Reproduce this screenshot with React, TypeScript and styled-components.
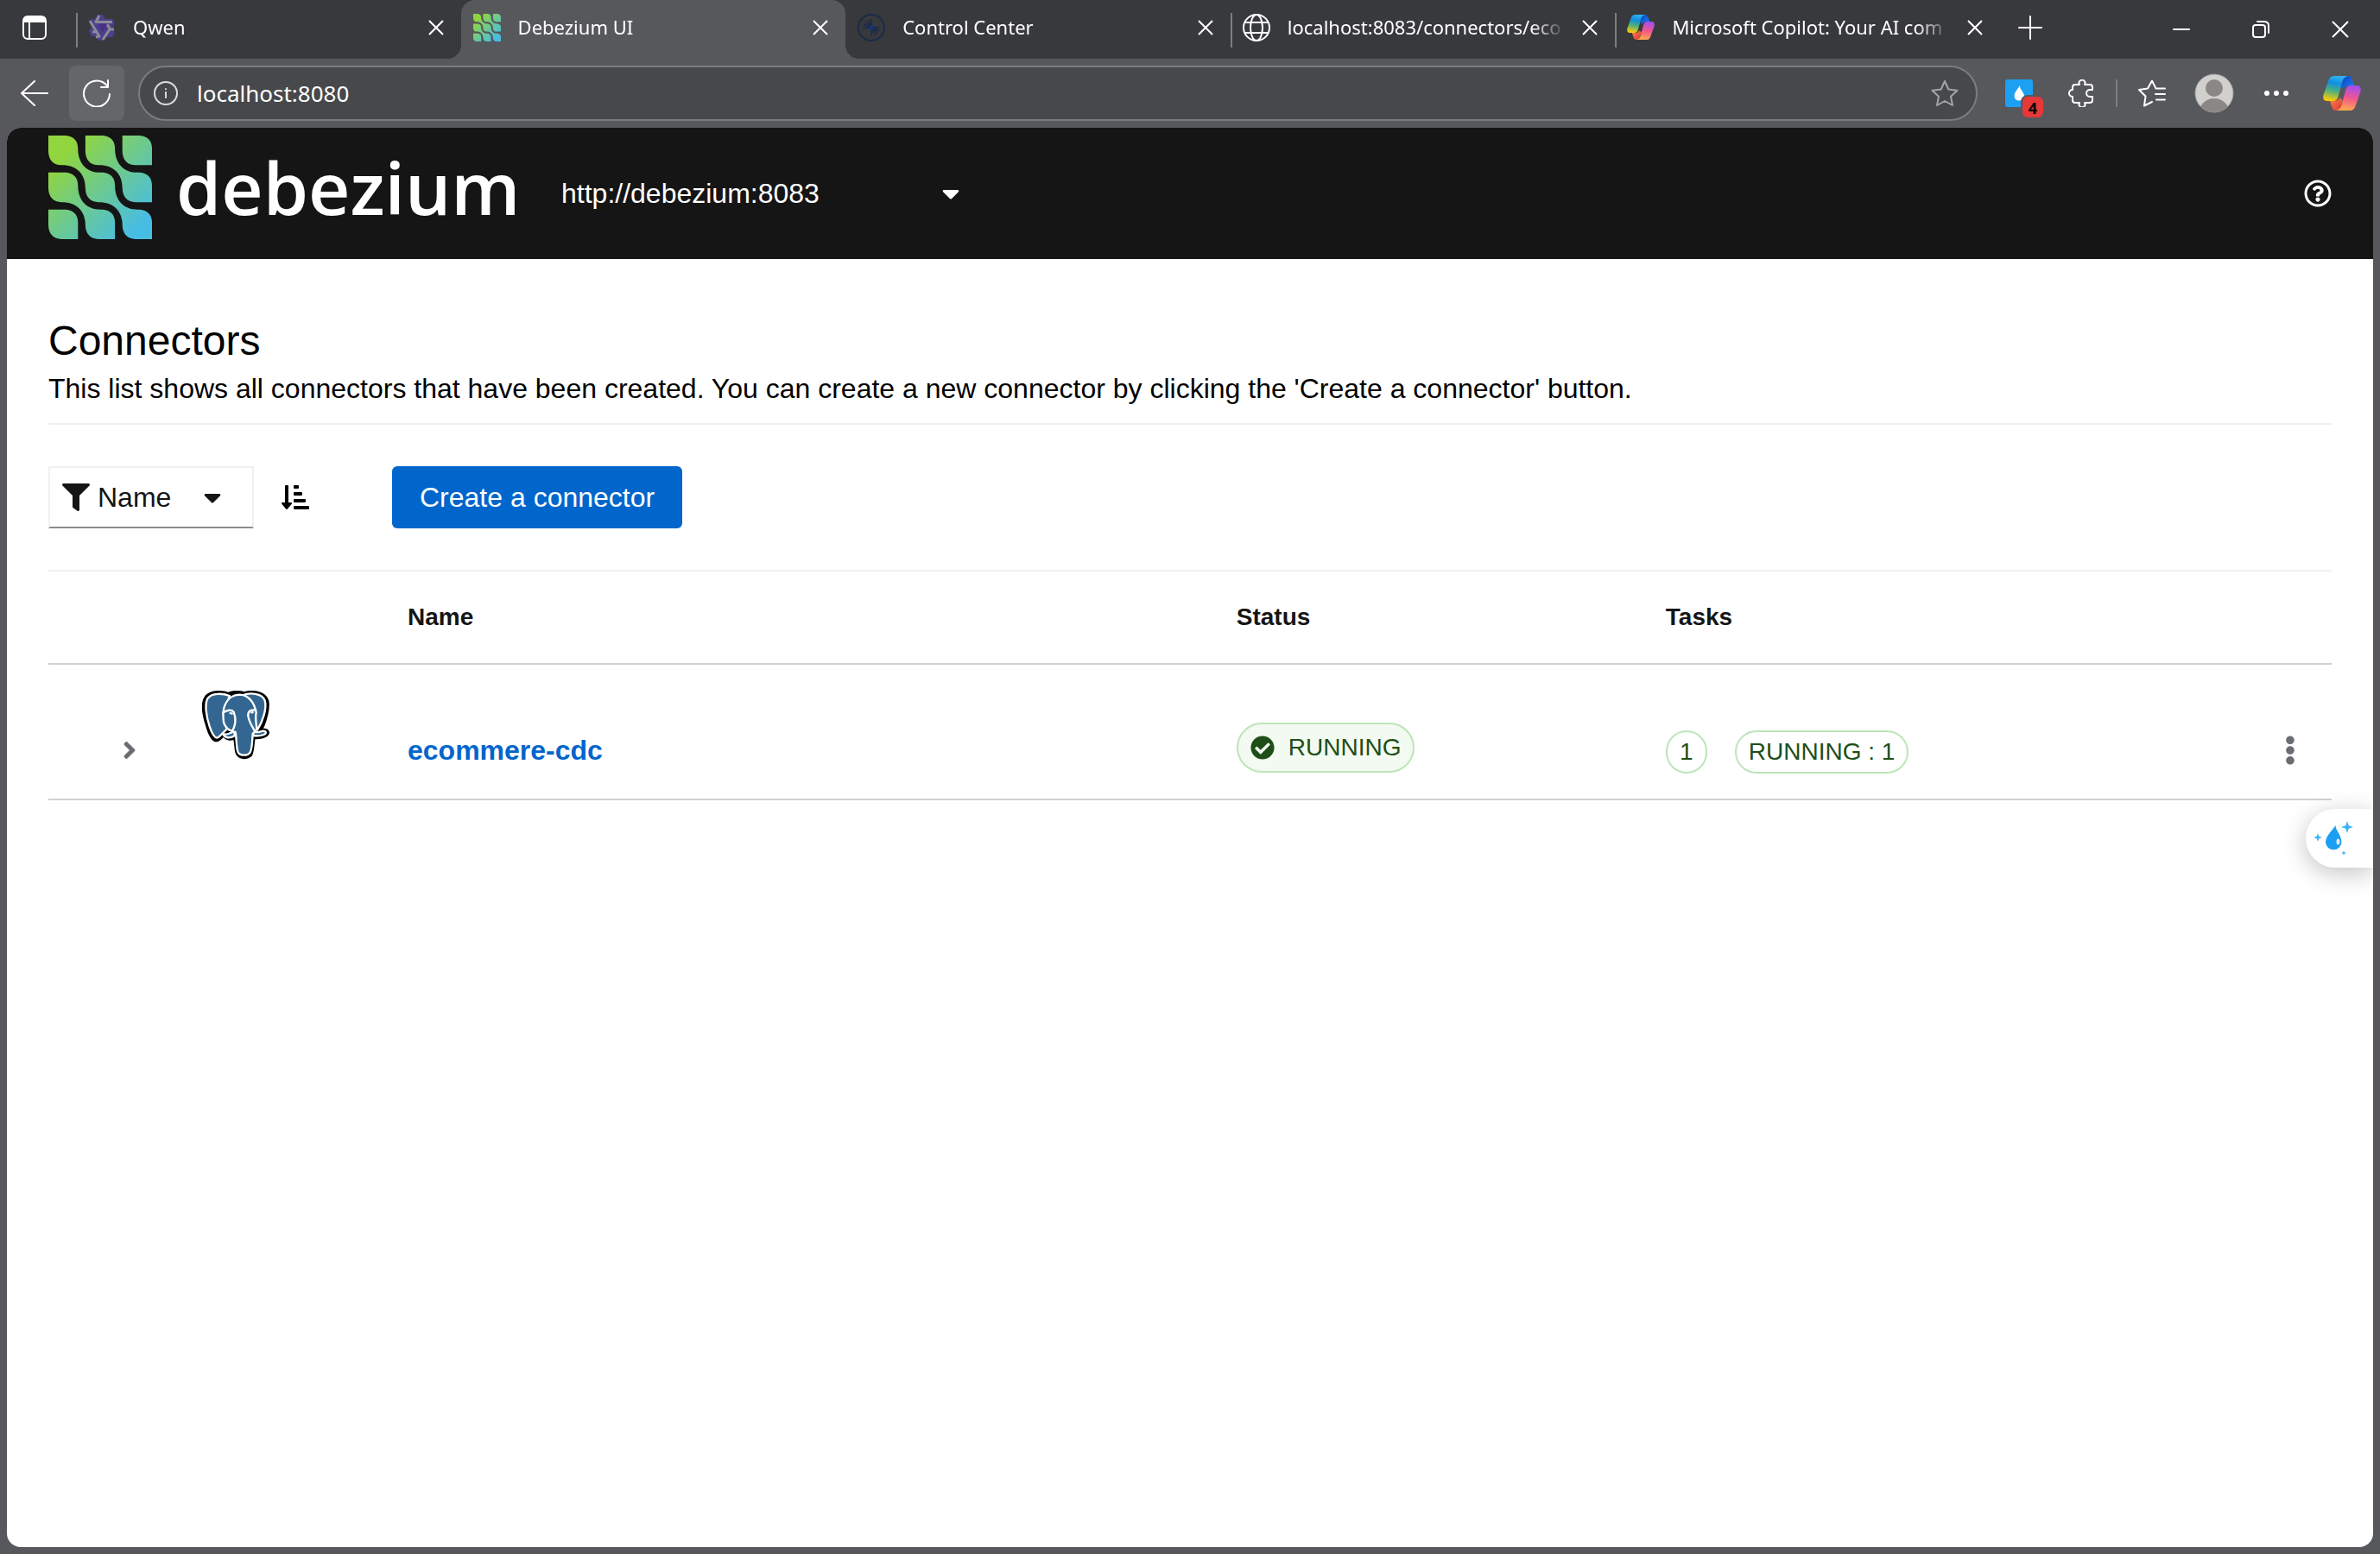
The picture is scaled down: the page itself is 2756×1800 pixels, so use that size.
import React, { useId } from "react";
import styled, { createGlobalStyle, css } from "styled-components";
import {
  FaAngleRight,
  FaCaretDown,
  FaCheckCircle,
  FaEllipsisV,
  FaFilter,
  FaRegQuestionCircle,
  FaSortAmountDownAlt,
} from "react-icons/fa";

const color = {
  strip: "#38393c",
  chrome: "#57585c",
  field: "#47484b",
  fieldBorder: "#7b7c7f",
  header: "#151515",
  text: "#151515",
  muted: "#6a6e73",
  primary: "#0066cc",
  lineSoft: "#f0f0f0",
  line: "#d2d2d2",
  green: "#1e4f18",
  greenLine: "#bde5b8",
  greenFill: "#f3faf2",
};

const browserFont = `"Noto Sans", "Open Sans", sans-serif`;
const pageFont = `"Liberation Sans", Arial, sans-serif`;

const GlobalStyle = createGlobalStyle`
  *, *::before, *::after { box-sizing: border-box; }
  body { margin: 0; background: ${color.chrome}; }
  button, input, select { font: inherit; color: inherit; margin: 0; }
  svg { display: block; flex: none; }
`;

/* ---------- Browser frame ---------- */

const Browser = styled.div`
  display: flex;
  flex-direction: column;
  min-height: 100vh;
  background: ${color.chrome};
  color: #fff;
  font-family: ${browserFont};
`;

const TabStrip = styled.div`
  display: flex;
  height: 68px;
  background: ${color.strip};
`;

const PlainButton = styled.button`
  display: flex;
  align-items: center;
  justify-content: center;
  padding: 0;
  border: 0;
  background: none;
  cursor: pointer;
`;

const StripButton = styled(PlainButton)<{ $width: number }>`
  flex: none;
  width: ${(p) => p.$width}px;
  height: 64px;
`;

const Tabs = styled.div`
  display: flex;
  flex: 0 1 2228px;
  min-width: 0;
  margin-left: 8px;
`;

const Tab = styled.div<{ $active?: boolean; $divided?: boolean }>`
  position: relative;
  display: flex;
  flex: 1 1 0;
  align-items: center;
  min-width: 0;
  padding: 0 9px 4px 14px;

  ${(p) =>
    p.$divided &&
    css`
      &::before {
        content: "";
        position: absolute;
        left: 0;
        top: 15px;
        width: 2px;
        height: 40px;
        background: #7d7e80;
      }
    `}

  ${(p) =>
    p.$active &&
    css`
      background: ${color.chrome};
      border-radius: 16px 16px 0 0;

      &::before,
      &::after {
        content: "";
        position: absolute;
        bottom: 0;
        width: 16px;
        height: 16px;
      }
      &::before {
        left: -16px;
        background: radial-gradient(circle at 0 0, transparent 16px, ${color.chrome} 16px);
      }
      &::after {
        right: -16px;
        background: radial-gradient(circle at 100% 0, transparent 16px, ${color.chrome} 16px);
      }
    `}
`;

const TabTitle = styled.span`
  flex: 1;
  min-width: 0;
  margin: 0 8px 0 20px;
  padding-bottom: 2px;
  overflow: hidden;
  white-space: nowrap;
  font-size: 22px;
  line-height: 32px;
  mask-image: linear-gradient(to right, #000 calc(100% - 40px), transparent);
`;

const TabClose = styled(PlainButton)`
  flex: none;
  width: 40px;
  height: 40px;
`;

const WindowButtons = styled.div`
  display: flex;
  margin-left: auto;
`;

const WindowButton = styled(PlainButton)`
  width: 92px;
  height: 68px;
`;

const AddressRow = styled.div`
  display: flex;
  align-items: center;
  height: 80px;
  padding: 0 4px 0 8px;
`;

const NavButton = styled(PlainButton)<{ $filled?: boolean }>`
  width: 64px;
  height: 64px;
  margin-right: ${(p) => (p.$filled ? 16 : 8)}px;
  border-radius: 8px;
  background: ${(p) => (p.$filled ? "#65666a" : "none")};
`;

const AddressBar = styled.div`
  display: flex;
  flex: 1;
  align-items: center;
  height: 64px;
  margin-right: 12px;
  padding: 0 20px 0 16px;
  border: 2px solid ${color.fieldBorder};
  border-radius: 32px;
  background: ${color.field};
`;

const AddressInput = styled.input`
  flex: 1;
  min-width: 0;
  padding: 0;
  margin: 0 22px;
  border: 0;
  outline: 0;
  background: none;
  font-size: 26px;
  line-height: 40px;
`;

const ToolButton = styled(PlainButton)<{ $wide?: boolean }>`
  position: relative;
  width: ${(p) => (p.$wide ? 80 : 72)}px;
  height: 64px;
`;

const ToolDivider = styled.span`
  width: 2px;
  height: 32px;
  margin: 0 4px;
  background: ${color.fieldBorder};
`;

const ExtensionBadge = styled.span`
  position: absolute;
  left: 38px;
  top: 34px;
  width: 28px;
  height: 28px;
  border: 2px solid ${color.chrome};
  border-radius: 8px;
  background: #e53838;
  color: #000;
  font-size: 18px;
  font-weight: 700;
  line-height: 26px;
  text-align: center;
`;

/* ---------- Debezium page ---------- */

const Page = styled.div`
  position: relative;
  flex: 1;
  margin: 0 8px 8px;
  overflow: hidden;
  border-radius: 16px;
  background: #fff;
  color: ${color.text};
  font-family: ${pageFont};
  font-size: 32px;
  line-height: 48px;
`;

const Masthead = styled.header`
  display: flex;
  align-items: center;
  height: 152px;
  padding: 0 48px;
  background: ${color.header};
  color: #fff;
`;

const Brand = styled.a`
  display: flex;
  align-items: center;
  gap: 28px;
  width: 594px;
  padding-bottom: 14px;
  color: #fff;
  text-decoration: none;
`;

const Wordmark = styled.span`
  font-family: "Open Sans", "Noto Sans", sans-serif;
  font-size: 84px;
  font-weight: 600;
  line-height: 112px;
`;

const SelectBox = styled.label`
  position: relative;
  display: flex;
  align-items: center;
`;

const Select = styled.select`
  appearance: none;
  width: 100%;
  padding: 0;
  border: 0;
  outline: 0;
  background: none;
  line-height: 48px;

  option {
    color: ${color.text};
  }
`;

const SelectCaret = styled(FaCaretDown)`
  position: absolute;
  right: 30px;
  pointer-events: none;
`;

const ClusterSelect = styled(SelectBox)`
  width: 497px;
`;

const HelpButton = styled(PlainButton)`
  margin-left: auto;
`;

const Main = styled.main`
  padding: 64px 48px 0;
`;

const Intro = styled.section`
  padding-bottom: 16px;
  border-bottom: 2px solid ${color.lineSoft};
  color: #000;
`;

const Title = styled.h1`
  margin: 0;
  font-size: 48px;
  font-weight: 400;
  line-height: 62px;
`;

const Lead = styled.p`
  margin: 0;
`;

const Toolbar = styled.div`
  display: flex;
  align-items: center;
  padding: 48px 0;
  border-bottom: 2px solid ${color.lineSoft};
`;

const FilterSelect = styled(SelectBox)`
  gap: 9px;
  width: 238px;
  height: 72px;
  padding-left: 14px;
  border: 2px solid ${color.lineSoft};
  border-bottom-color: #8a8d90;
`;

const SortButton = styled(PlainButton)`
  width: 96px;
  height: 72px;
  margin-right: 64px;
  color: #000;
`;

const CreateButton = styled.button`
  height: 72px;
  padding: 0 32px;
  border: 0;
  border-radius: 6px;
  background: ${color.primary};
  color: #fff;
  cursor: pointer;
`;

const Table = styled.table`
  width: 100%;
  table-layout: fixed;
  border-collapse: separate;
  border-spacing: 0;
`;

const Column = styled.col<{ $width?: string }>`
  width: ${(p) => p.$width ?? "auto"};
`;

const HeadRow = styled.tr`
  height: 108px;
`;

const HeadCell = styled.th`
  padding: 0;
  border-bottom: 2px solid ${color.line};
  font-size: 28px;
  line-height: 42px;
  text-align: left;
`;

const BodyRow = styled.tr`
  height: 157px;
`;

const Cell = styled.td<{ $top?: number }>`
  padding: ${(p) => p.$top ?? 75}px 0 16px;
  border-bottom: 2px solid ${color.line};
  vertical-align: top;
`;

const ToggleButton = styled(PlainButton)`
  width: 32px;
  height: 48px;
  margin-left: 78px;
  color: ${color.muted};
`;

const KebabButton = styled(PlainButton)`
  width: 32px;
  height: 48px;
  margin: 0 32px 0 auto;
  color: ${color.muted};
`;

const ConnectorLogo = styled.div`
  padding-left: 38px;
`;

const ConnectorLink = styled.a`
  color: ${color.primary};
  font-weight: 700;
  text-decoration: none;
`;

const StatusLabel = styled.span`
  display: inline-flex;
  align-items: center;
  gap: 16px;
  height: 58px;
  padding: 0 14px;
  border: 2px solid ${color.greenLine};
  border-radius: 30px;
  background: ${color.greenFill};
  color: ${color.green};
  font-size: 28px;
  line-height: 42px;
  vertical-align: top;
`;

const TaskBadges = styled.div`
  display: flex;
  gap: 32px;
`;

const TaskBadge = styled.span`
  min-width: 48px;
  height: 50px;
  padding: 0 14px;
  border: 2px solid ${color.greenLine};
  border-radius: 25px;
  color: ${color.green};
  font-size: 28px;
  line-height: 46px;
  text-align: center;
`;

const Assistant = styled.button`
  position: absolute;
  right: 0;
  top: 789px;
  display: flex;
  align-items: center;
  width: 78px;
  height: 68px;
  padding: 0 0 0 8px;
  border: 0;
  border-radius: 34px 0 0 34px;
  background: #fff;
  box-shadow: 0 6px 28px rgba(0, 0, 0, 0.24);
  cursor: pointer;
`;

/* ---------- Drawings ---------- */

const PITCH = 42.5;

/** One diagonal chain of linked tiles in the Debezium mark. */
function chain(ox: number, oy: number, count: number) {
  let d = `M${ox} ${oy}`;
  for (let i = 0; i < count; i++) {
    const x = ox + i * PITCH;
    const y = oy + i * PITCH;
    d += `H${x + 20}C${x + 29} ${y + 1} ${x + 34} ${y + 6} ${x + 34} ${y + 15}`;
    d +=
      i < count - 1
        ? `C${x + 34} ${y + 32} ${x + 44} ${y + 42.5} ${x + 60} ${y + 42.5}`
        : `V${y + 34}`;
  }
  for (let i = count - 1; i >= 0; i--) {
    const x = ox + i * PITCH;
    const y = oy + i * PITCH;
    d += `H${x + 15}C${x + 6} ${y + 34} ${x} ${y + 28} ${x} ${y + 17.5}`;
    if (i > 0) d += `C${x} ${y + 1.5} ${x - 10.5} ${y - 8.5} ${x - 26.5} ${y - 8.5}`;
  }
  return d + "Z";
}

function DebeziumMark({ size }: { size: number }) {
  const id = useId();
  return (
    <svg width={size} height={size} viewBox="0 0 119 119" aria-hidden="true">
      <defs>
        <linearGradient id={id} gradientUnits="userSpaceOnUse" x1="20" y1="20" x2="104" y2="104">
          <stop offset="0" stopColor="#91d53f" />
          <stop offset="0.5" stopColor="#6bc992" />
          <stop offset="1" stopColor="#48bde3" />
        </linearGradient>
      </defs>
      <g fill={`url(#${id})`}>
        <path d={chain(0, 0, 3)} />
        <path d={chain(PITCH, 0, 2)} />
        <path d={chain(0, PITCH, 2)} />
        <path d={chain(PITCH * 2, 0, 1)} />
        <path d={chain(0, PITCH * 2, 1)} />
      </g>
    </svg>
  );
}

function CopilotMark({ size }: { size: number }) {
  const id = useId();
  const ribbon =
    "M6.5 5Q8 0 13 0H29Q24 1 22.5 6L17.5 24.5Q16 29 12 29H5.500Q-1 29 .5 22Z";
  const fold = "M29 0Q32.500 0 33.500 3.500L36 11H31Q26 11 24.500 15L21 12L23 5Q24.500 0 29 0Z";
  return (
    <svg width={size} height={(size * 40) / 44} viewBox="0 0 44 40" aria-hidden="true">
      <defs>
        <linearGradient id={`${id}a`} x1="0.6" y1="0" x2="0.4" y2="1">
          <stop offset="0" stopColor="#31b4f2" />
          <stop offset="0.3" stopColor="#0f8fe2" />
          <stop offset="0.62" stopColor="#4fb07a" />
          <stop offset="1" stopColor="#ffcb05" />
        </linearGradient>
        <linearGradient id={`${id}b`} x1="0" y1="0" x2="1" y2="1">
          <stop offset="0" stopColor="#0b3fc4" />
          <stop offset="1" stopColor="#1b86ee" />
        </linearGradient>
        <linearGradient id={`${id}c`} x1="0.4" y1="1" x2="0.6" y2="0">
          <stop offset="0" stopColor="#a34df0" />
          <stop offset="0.5" stopColor="#f2578c" />
          <stop offset="1" stopColor="#ffad4d" />
        </linearGradient>
        <linearGradient id={`${id}d`} x1="0" y1="0" x2="1" y2="1">
          <stop offset="0" stopColor="#d9303c" />
          <stop offset="1" stopColor="#ff8a3d" />
        </linearGradient>
      </defs>
      <path d={fold} fill={`url(#${id}b)`} />
      <path d={fold} fill={`url(#${id}d)`} transform="rotate(180 22 20)" />
      <path d={ribbon} fill={`url(#${id}a)`} />
      <path d={ribbon} fill={`url(#${id}c)`} transform="rotate(180 22 20)" />
    </svg>
  );
}

function QwenMark() {
  return (
    <svg width="32" height="32" viewBox="0 0 32 32" aria-hidden="true">
      <path
        d="M11 1H17L20 6H28L31 11L28 16L31 22L28 27H22L17 31H12L9 26H4L1 20L4 15L1 9L4 6H8Z"
        fill="#4b3f8c"
      />
      <g fill="none" stroke="#8b8b94" strokeWidth="3" strokeLinejoin="round">
        <path d="M13 2L9 9.500H28" />
        <path d="M3 8L14 26L10 27" transform="translate(-1 0)" />
        <path d="M30 18H25L17 30M25 17L22 12" />
        <path d="M5 21H11" />
      </g>
      <path d="M12 12H22L16.500 22Z" fill="#4a2f86" />
    </svg>
  );
}

function ControlCenterMark() {
  const rays = [
    [16, 6, 16, 16],
    [6, 16, 16, 16],
    [16, 16, 16, 26],
    [16, 16, 26, 16],
    [9, 9, 16, 16],
    [16, 16, 23, 23],
    [12, 7, 16, 16],
    [7, 12, 16, 16],
    [16, 16, 20, 25],
    [16, 16, 25, 20],
  ];
  return (
    <svg width="32" height="32" viewBox="0 0 32 32" fill="none" stroke="#1a2a49" strokeWidth="2" aria-hidden="true">
      <circle cx="16" cy="16" r="15" />
      {rays.map(([x1, y1, x2, y2]) => (
        <line key={`${x1}-${y1}-${x2}-${y2}`} x1={x1} y1={y1} x2={x2} y2={y2} strokeWidth="1.5" />
      ))}
      <circle cx="16" cy="16" r="3" fill="#14356f" stroke="none" />
    </svg>
  );
}

function GlobeMark() {
  return (
    <svg width="32" height="32" viewBox="0 0 32 32" fill="none" stroke="#fff" strokeWidth="2" aria-hidden="true">
      <circle cx="16" cy="16" r="15" />
      <ellipse cx="16" cy="16" rx="7" ry="15" />
      <path d="M2 10H30M2 22H30" />
    </svg>
  );
}

function Cross({ size, stroke = 2 }: { size: number; stroke?: number }) {
  return (
    <svg width={size} height={size} viewBox={`0 0 ${size} ${size}`} stroke="#fff" strokeWidth={stroke} aria-hidden="true">
      <path d={`M1 1L${size - 1} ${size - 1}M${size - 1} 1L1 ${size - 1}`} />
    </svg>
  );
}

function Drawing({
  width = 32,
  height = 32,
  stroke = "#fff",
  children,
}: {
  width?: number;
  height?: number;
  stroke?: string;
  children: React.ReactNode;
}) {
  return (
    <svg
      width={width}
      height={height}
      viewBox={`0 0 ${width} ${height}`}
      fill="none"
      stroke={stroke}
      strokeWidth="2"
      strokeLinecap="round"
      strokeLinejoin="round"
      aria-hidden="true"
    >
      {children}
    </svg>
  );
}

function PostgresElephant() {
  return (
    <svg width="80" height="80" viewBox="0 0 240 240" role="img" aria-label="PostgreSQL">
      <g strokeLinejoin="round" strokeLinecap="round">
        <g stroke="#000" strokeWidth="20" fill="#000">
          <path d="M92 16C70 8 34 6 18 24C4 42 10 84 22 120C30 148 42 168 50 168C60 166 74 148 84 138L118 160L124 210C128 228 150 232 164 222C172 214 170 190 176 158C196 160 222 156 224 146C224 138 210 142 198 138C214 112 228 60 222 36C212 8 170 6 146 14C128 8 108 8 92 16Z" />
          <path d="M78 148C84 166 100 166 116 158" />
        </g>
        <g stroke="#fff" strokeWidth="7" fill="#336791">
          <path d="M140 16C166 6 208 8 218 34C226 62 210 108 192 136L176 120Z" />
          <path d="M96 18C70 8 34 8 20 26C8 46 14 88 26 124C34 148 44 164 52 164C60 162 74 144 86 134L80 60Z" />
          <path d="M178 142C190 146 202 144 212 140C222 140 226 148 214 153C202 158 190 158 178 156Z" />
          <path d="M74 152C80 166 98 166 114 156L110 138C100 142 100 152 74 152Z" />
          <path d="M76 60C84 32 104 14 132 14C164 16 182 44 188 76C184 94 188 112 190 134C186 142 180 144 176 150C174 178 174 206 166 216C156 228 130 226 124 212C118 190 120 164 116 144C92 142 74 122 74 100C72 86 72 74 76 60Z" />
          <path d="M74 76C84 68 102 64 110 74C120 100 116 124 102 146" fill="none" />
          <path d="M186 68C170 64 158 72 160 88C164 112 176 126 184 142" fill="none" />
        </g>
        <path d="M98 78L104 80M172 76L176 75" stroke="#fff" strokeWidth="7" />
        <path d="M82 150L90 140L102 142Z" fill="#000" />
      </g>
    </svg>
  );
}

function Sparkle({ x, y, r }: { x: number; y: number; r: number }) {
  const k = r / 4;
  return (
    <path
      fill="#38b2f7"
      d={`M${x} ${y - r}L${x + k} ${y - k}L${x + r} ${y}L${x + k} ${y + k}L${x} ${y + r}L${x - k} ${y + k}L${x - r} ${y}L${x - k} ${y - k}Z`}
    />
  );
}

/* ---------- Content ---------- */

const tabs = [
  { title: "Qwen", icon: <QwenMark />, divided: true },
  { title: "Debezium UI", icon: <DebeziumMark size={32} />, active: true },
  { title: "Control Center", icon: <ControlCenterMark /> },
  { title: "localhost:8083/connectors/eco", icon: <GlobeMark />, divided: true },
  { title: "Microsoft Copilot: Your AI com", icon: <CopilotMark size={32} />, divided: true },
];

const connectors = [{ name: "ecommere-cdc", status: "RUNNING", taskCount: 1 }];

function BrowserTabs() {
  return (
    <TabStrip>
      <StripButton $width={80} aria-label="Tab actions">
        <Drawing width={28} height={28}>
          <rect x="1" y="1" width="26" height="26" rx="5" />
          <path d="M2 7V5Q2 2 5 2H23Q26 2 26 5V7Z" fill="#fff" />
          <path d="M8 8V26" />
        </Drawing>
      </StripButton>
      <Tabs>
        {tabs.map((tab) => (
          <Tab key={tab.title} $active={tab.active} $divided={tab.divided}>
            {tab.icon}
            <TabTitle>{tab.title}</TabTitle>
            <TabClose aria-label={`Close ${tab.title}`}>
              <Cross size={18} />
            </TabClose>
          </Tab>
        ))}
      </Tabs>
      <StripButton $width={70} aria-label="New tab">
        <Drawing width={28} height={28}>
          <path d="M14 1V27M1 14H27" />
        </Drawing>
      </StripButton>
      <WindowButtons>
        <WindowButton aria-label="Minimize">
          <Drawing width={20} height={20}>
            <path d="M1 10H19" />
          </Drawing>
        </WindowButton>
        <WindowButton aria-label="Restore">
          <Drawing width={20} height={20}>
            <rect x="1" y="5" width="14" height="14" rx="3" />
            <path d="M6 1H14Q19 1 19 6V14" />
          </Drawing>
        </WindowButton>
        <WindowButton aria-label="Close window">
          <Cross size={20} />
        </WindowButton>
      </WindowButtons>
    </TabStrip>
  );
}

const starPath = "M16 2L20.300 11.500L30.500 12.700L23 19.700L25 30L16 25L7 30L9 19.700L1.500 12.700L11.700 11.500Z";

function BrowserToolbar() {
  return (
    <AddressRow>
      <NavButton aria-label="Back">
        <Drawing>
          <path d="M31 16H1M16 2L1 16L16 30" />
        </Drawing>
      </NavButton>
      <NavButton $filled aria-label="Reload">
        <Drawing>
          <path d="M31 17A15 15 0 1 1 28 7.500M29 1V9H21" />
        </Drawing>
      </NavButton>
      <AddressBar>
        <Drawing width={28} height={28} stroke="#dcdcdc">
          <circle cx="14" cy="14" r="13" />
          <path d="M14 13V19M14 9V9.200" />
        </Drawing>
        <AddressInput aria-label="Address" type="text" defaultValue="localhost:8080" />
        <PlainButton aria-label="Add to favorites">
          <Drawing stroke="#a3a4a6">
            <path d={starPath} />
          </Drawing>
        </PlainButton>
      </AddressBar>
      <ToolButton aria-label="Extension">
        <svg width="32" height="32" viewBox="0 0 32 32" aria-hidden="true">
          <rect width="32" height="32" rx="3" fill="#1da0f2" />
          <path d="M17 7C16.500 12 22 14 22 19.500A5.800 5.800 0 0 1 10.500 19.500C10.500 15 14.500 11 17 7Z" fill="#fff" />
        </svg>
        <ExtensionBadge>4</ExtensionBadge>
      </ToolButton>
      <ToolButton aria-label="Extensions">
        <Drawing>
          <path d="M9 6H14A3.500 3.500 0 1 1 20 6H26Q29 6 29 9V12H26A4 4 0 0 0 26 20H29V24Q29 27 26 27H20A3.500 3.500 0 1 1 14 27H9Q6 27 6 24V20A4 4 0 1 1 6 12V9Q6 6 9 6Z" />
        </Drawing>
      </ToolButton>
      <ToolDivider />
      <ToolButton aria-label="Favorites">
        <Drawing>
          <path d="M16 26L7 30.500L8.500 19.500L1 12L11 10.500L16 1.500L20.500 10.500H31M20 17H31M21 23.500H31" />
        </Drawing>
      </ToolButton>
      <ToolButton aria-label="Profile">
        <svg width="46" height="46" viewBox="0 0 46 46" aria-hidden="true">
          <defs>
            <clipPath id="avatar-clip">
              <circle cx="23" cy="23" r="22" />
            </clipPath>
          </defs>
          <circle cx="23" cy="23" r="22" fill="#d2d0cd" stroke="#a5a4a3" />
          <g fill="#8a8784" clipPath="url(#avatar-clip)">
            <circle cx="23" cy="17" r="10" />
            <circle cx="23" cy="47" r="18" />
          </g>
        </svg>
      </ToolButton>
      <ToolButton aria-label="Settings and more">
        <svg width="28" height="6" viewBox="0 0 28 6" fill="#fff" aria-hidden="true">
          <circle cx="3" cy="3" r="3" />
          <circle cx="14" cy="3" r="3" />
          <circle cx="25" cy="3" r="3" />
        </svg>
      </ToolButton>
      <ToolButton $wide aria-label="Copilot">
        <CopilotMark size={44} />
      </ToolButton>
    </AddressRow>
  );
}

function ConnectorTable() {
  return (
    <Table>
      <colgroup>
        <Column $width="140px" />
        <Column $width="276px" />
        <Column $width="36.3%" />
        <Column $width="18.8%" />
        <Column />
        <Column $width="140px" />
      </colgroup>
      <thead>
        <HeadRow>
          <HeadCell />
          <HeadCell />
          <HeadCell scope="col">Name</HeadCell>
          <HeadCell scope="col">Status</HeadCell>
          <HeadCell scope="col">Tasks</HeadCell>
          <HeadCell />
        </HeadRow>
      </thead>
      <tbody>
        {connectors.map((connector) => (
          <BodyRow key={connector.name}>
            <Cell>
              <ToggleButton aria-label={`Details of ${connector.name}`}>
                <FaAngleRight size={32} />
              </ToggleButton>
            </Cell>
            <Cell $top={30}>
              <ConnectorLogo>
                <PostgresElephant />
              </ConnectorLogo>
            </Cell>
            <Cell>
              <ConnectorLink href="#connector">{connector.name}</ConnectorLink>
            </Cell>
            <Cell $top={67}>
              <StatusLabel>
                <FaCheckCircle size={28} />
                {connector.status}
              </StatusLabel>
            </Cell>
            <Cell $top={76}>
              <TaskBadges>
                <TaskBadge>{connector.taskCount}</TaskBadge>
                <TaskBadge>{`${connector.status} : ${connector.taskCount}`}</TaskBadge>
              </TaskBadges>
            </Cell>
            <Cell>
              <KebabButton aria-label={`Actions for ${connector.name}`}>
                <FaEllipsisV size={34} />
              </KebabButton>
            </Cell>
          </BodyRow>
        ))}
      </tbody>
    </Table>
  );
}

export default function App() {
  return (
    <Browser>
      <GlobalStyle />
      <BrowserTabs />
      <BrowserToolbar />
      <Page>
        <Masthead>
          <Brand href="#home">
            <DebeziumMark size={120} />
            <Wordmark>debezium</Wordmark>
          </Brand>
          <ClusterSelect>
            <Select aria-label="Kafka Connect cluster">
              <option>http://debezium:8083</option>
            </Select>
            <SelectCaret size={32} />
          </ClusterSelect>
          <HelpButton aria-label="Help">
            <FaRegQuestionCircle size={32} />
          </HelpButton>
        </Masthead>
        <Main>
          <Intro>
            <Title>Connectors</Title>
            <Lead>
              This list shows all connectors that have been created. You can create a new connector
              by clicking the 'Create a connector' button.
            </Lead>
          </Intro>
          <Toolbar>
            <FilterSelect>
              <FaFilter size={32} />
              <Select aria-label="Sort by">
                <option>Name</option>
              </Select>
              <SelectCaret size={32} />
            </FilterSelect>
            <SortButton aria-label="Sort ascending">
              <FaSortAmountDownAlt size={32} />
            </SortButton>
            <CreateButton>Create a connector</CreateButton>
          </Toolbar>
          <ConnectorTable />
        </Main>
        <Assistant aria-label="Open assistant">
          <svg width="50" height="42" viewBox="0 0 50 42" aria-hidden="true">
            <path
              d="M26.500 6C26.500 12 33.500 17 33.500 26A9.300 9.300 0 0 1 15 26C15 18 23 12 26.500 6Z"
              fill="#1c9ff3"
            />
            <ellipse cx="29.500" cy="25" rx="2" ry="3.500" fill="#e4ecf0" />
            <Sparkle x={40} y={8} r={7} />
            <Sparkle x={6} y={20} r={5} />
            <Sparkle x={36} y={38} r={3} />
          </svg>
        </Assistant>
      </Page>
    </Browser>
  );
}
